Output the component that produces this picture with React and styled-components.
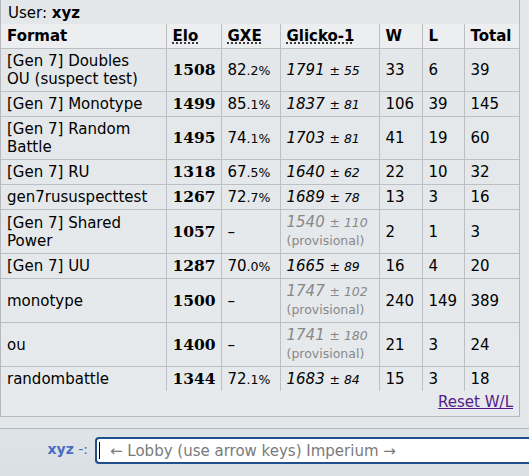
import React from "react";
import styled, { createGlobalStyle } from "styled-components";

const Global = createGlobalStyle`
  html, body {
    margin: 0;
    padding: 0;
    height: 100%;
  }
  body {
    background: #e3e7ea;
    font-family: "DejaVu Sans", Verdana, sans-serif;
    font-size: 15px;
    color: #000;
    overflow: hidden;
  }
`;

const Page = styled.div`
  display: flex;
  flex-direction: column;
  height: 476px;
  width: 529px;
`;

const Panel = styled.div`
  width: 518px;
  border: 1px solid #b5b9bd;
  border-top: none;
  background: linear-gradient(#e3e7ea, #e6eaec);
`;

const UserLine = styled.div`
  height: 24px;
  line-height: 26px;
  padding: 0 7px;
  box-sizing: border-box;
  strong {
    font-weight: bold;
  }
`;

const Table = styled.table`
  width: 518px;
  border-collapse: collapse;
  table-layout: fixed;
  border-style: hidden;
`;

const Th = styled.th`
  text-align: left;
  font-weight: bold;
  background: #eceef0;
  border: 1px solid #bcc0c4;
  padding: 3px 6px;
  line-height: 18px;
  height: 18px;
  abbr {
    text-decoration: underline dotted;
    text-underline-offset: 2px;
  }
`;

const Td = styled.td`
  border: 1px solid #bcc0c4;
  padding: 3px 6px;
  line-height: 18px;
  height: 18px;
  vertical-align: middle;
  white-space: ${(p) => (p.$nowrap ? "nowrap" : "normal")};
`;

const Elo = styled.strong`
  font-family: "DejaVu Serif", Georgia, serif;
  font-weight: bold;
  font-size: 15.5px;
  line-height: 1;
`;

const Small = styled.small`
  font-size: 12.5px;
  line-height: 1;
`;

const Glicko = styled.em`
  font-style: italic;
  font-size: 15px;
`;

const Provisional = styled.span`
  display: block;
  color: #888;
  font-size: 12.5px;
  line-height: 18px;
`;

const Footer = styled.div`
  display: flex;
  justify-content: flex-end;
  padding: 2px 6px 0;
  height: 25px;
  box-sizing: border-box;
`;

const Link = styled.a`
  color: #551a8b;
  text-decoration: underline;
  cursor: pointer;
`;

const Gap = styled.div`
  height: 11px;
`;

const ChatBar = styled.div`
  flex: 1;
  border-top: 1px solid #b0b6bc;
  background: linear-gradient(#dfe4e8, #d9dfe3);
  display: flex;
  align-items: flex-start;
  padding-top: 8px;
`;

const Label = styled.div`
  width: 95px;
  box-sizing: border-box;
  text-align: right;
  padding-right: 7px;
  padding-top: 4px;
  color: #4a6cc4;
  font-size: 14px;
  strong {
    font-weight: bold;
  }
`;

const Input = styled.div`
  flex: 1;
  height: 27px;
  box-sizing: border-box;
  background: #fff;
  border: 2px solid #1f4f8f;
  border-right: none;
  border-radius: 4px 0 0 4px;
  display: flex;
  align-items: center;
  padding-left: 2px;
  color: #7a7a7a;
`;

const Caret = styled.span`
  display: inline-block;
  width: 1px;
  height: 17px;
  background: #000;
  margin-right: 10px;
`;

const rows = [
  { format: ["[Gen 7] Doubles", "OU (suspect test)"], elo: 1508, gxe: ["82", ".2%"], g: 1791, d: 55, w: 33, l: 6, t: 39 },
  { format: ["[Gen 7] Monotype"], elo: 1499, gxe: ["85", ".1%"], g: 1837, d: 81, w: 106, l: 39, t: 145 },
  { format: ["[Gen 7] Random", "Battle"], elo: 1495, gxe: ["74", ".1%"], g: 1703, d: 81, w: 41, l: 19, t: 60 },
  { format: ["[Gen 7] RU"], elo: 1318, gxe: ["67", ".5%"], g: 1640, d: 62, w: 22, l: 10, t: 32 },
  { format: ["gen7rususpecttest"], elo: 1267, gxe: ["72", ".7%"], g: 1689, d: 78, w: 13, l: 3, t: 16 },
  { format: ["[Gen 7] Shared", "Power"], elo: 1057, gxe: null, g: 1540, d: 110, prov: true, w: 2, l: 1, t: 3 },
  { format: ["[Gen 7] UU"], elo: 1287, gxe: ["70", ".0%"], g: 1665, d: 89, w: 16, l: 4, t: 20 },
  { format: ["monotype"], elo: 1500, gxe: null, g: 1747, d: 102, prov: true, w: 240, l: 149, t: 389 },
  { format: ["ou"], elo: 1400, gxe: null, g: 1741, d: 180, prov: true, w: 21, l: 3, t: 24 },
  { format: ["randombattle"], elo: 1344, gxe: ["72", ".1%"], g: 1683, d: 84, w: 15, l: 3, t: 18 },
];

const widths = [165, 55, 59, 99, 43, 42, 55];

export default function App() {
  return (
    <Page>
      <Global />
      <Panel>
        <UserLine>
          User: <strong>xyz</strong>
        </UserLine>
        <Table>
          <colgroup>
            {widths.map((w, i) => (
              <col key={i} style={{ width: w }} />
            ))}
          </colgroup>
          <thead>
            <tr>
              <Th>Format</Th>
              <Th><abbr>Elo</abbr></Th>
              <Th><abbr>GXE</abbr></Th>
              <Th><abbr>Glicko-1</abbr></Th>
              <Th>W</Th>
              <Th>L</Th>
              <Th>Total</Th>
            </tr>
          </thead>
          <tbody>
            {rows.map((r) => (
              <tr key={r.format.join(" ")}>
                <Td>
                  {r.format.map((line, i) => (
                    <React.Fragment key={i}>
                      {i > 0 && <br />}
                      {line}
                    </React.Fragment>
                  ))}
                </Td>
                <Td><Elo>{r.elo}</Elo></Td>
                <Td>
                  {r.gxe ? (
                    <>
                      {r.gxe[0]}
                      <Small>{r.gxe[1]}</Small>
                    </>
                  ) : (
                    "–"
                  )}
                </Td>
                <Td $nowrap>
                  {r.prov ? (
                    <Provisional>
                      <Glicko>
                        {r.g} <Small>± {r.d}</Small>
                      </Glicko>
                      <br />
                      (provisional)
                    </Provisional>
                  ) : (
                    <Glicko>
                      {r.g} <Small>± {r.d}</Small>
                    </Glicko>
                  )}
                </Td>
                <Td>{r.w}</Td>
                <Td>{r.l}</Td>
                <Td>{r.t}</Td>
              </tr>
            ))}
          </tbody>
        </Table>
        <Footer>
          <Link>Reset W/L</Link>
        </Footer>
      </Panel>
      <Gap />
      <ChatBar>
        <Label>
          <strong>xyz</strong> -:
        </Label>
        <Input>
          <Caret />
          ← Lobby (use arrow keys) Imperium →
        </Input>
      </ChatBar>
    </Page>
  );
}
